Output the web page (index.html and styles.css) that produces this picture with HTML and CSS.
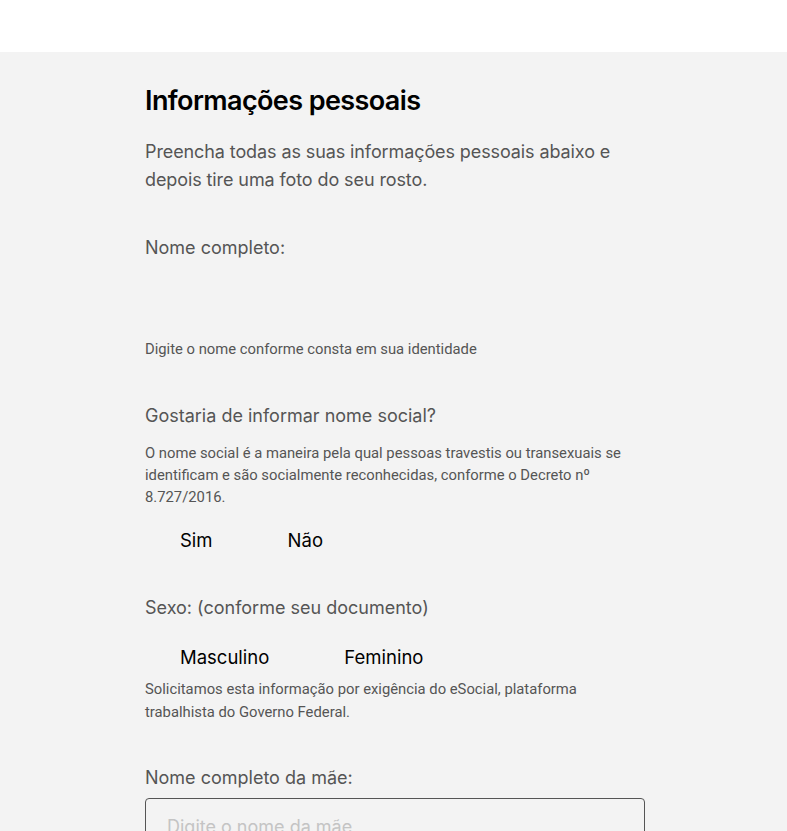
FILE: index.html
```html
<!DOCTYPE html>
<html lang="pt-BR">
  <head>
    <meta charset="UTF-8" />
    <meta name="viewport" content="width=device-width, initial-scale=1.0" />
    <title>Informações pessoais</title>
    <link rel="stylesheet" href="styles.css">
  </head>
  <body>
    <header class="topbar"></header>
    <main class="page">
      <form class="form">
        <h1 class="title">Informações pessoais</h1>
        <p class="intro">Preencha todas as suas informações pessoais abaixo e depois tire uma foto do seu rosto.</p>

        <div class="field field-name">
          <label class="label" for="nome">Nome completo:</label>
          <input class="input-ghost" id="nome" type="text" />
          <p class="hint">Digite o nome conforme consta em sua identidade</p>
        </div>

        <div class="field field-social">
          <p class="label">Gostaria de informar nome social?</p>
          <p class="hint">O nome social é a maneira pela qual pessoas travestis ou transexuais se identificam e são socialmente reconhecidas, conforme o Decreto nº 8.727/2016.</p>
          <div class="options">
            <label class="option"><input type="radio" name="social" /><span>Sim</span></label>
            <label class="option"><input type="radio" name="social" /><span>Não</span></label>
          </div>
        </div>

        <div class="field field-sex">
          <p class="label">Sexo: (conforme seu documento)</p>
          <div class="options">
            <label class="option"><input type="radio" name="sexo" /><span>Masculino</span></label>
            <label class="option"><input type="radio" name="sexo" /><span>Feminino</span></label>
          </div>
          <p class="hint">Solicitamos esta informação por exigência do eSocial, plataforma trabalhista do Governo Federal.</p>
        </div>

        <div class="field field-mother">
          <label class="label" for="mae">Nome completo da mãe:</label>
          <input class="input" id="mae" type="text" placeholder="Digite o nome da mãe" />
        </div>
      </form>
    </main>
  </body>
</html>
```

FILE: styles.css
```css
* {
  margin: 0;
  padding: 0;
  box-sizing: border-box;
}

body {
  font-family: Inter, "Noto Sans", sans-serif;
  background: #f3f3f3;
  color: #555;
}

.topbar {
  height: 52px;
  background: #ffffff;
}

.page {
  padding: 0 142px 40px 145px;
}

.form {
  display: flex;
  flex-direction: column;
}

.title {
  font-size: 27px;
  font-weight: 600;
  color: #000;
  line-height: 34px;
  letter-spacing: -0.6px;
  margin-top: 32px;
}

.intro {
  font-size: 18px;
  line-height: 28px;
  letter-spacing: -0.1px;
  margin-top: 20px;
  max-width: 480px;
}

.field {
  display: flex;
  flex-direction: column;
}

.label {
  font-size: 18px;
  line-height: 26px;
  color: #555;
}

.hint {
  font-family: Roboto, "Liberation Sans", sans-serif;
  font-size: 14.8px;
  line-height: 22px;
  color: #555;
  max-width: 490px;
}

.field-name {
  margin-top: 41px;
}

.input-ghost {
  height: 36px;
  margin: 14px 0 27px;
  border: none;
  background: transparent;
  outline: none;
}

.field-social {
  margin-top: 43px;
}

.field-social .hint {
  margin-top: 13px;
}

.options {
  display: flex;
  gap: 40px;
  margin-top: 19px;
}

.option {
  display: flex;
  align-items: center;
  gap: 11px;
  font-size: 18.5px;
  line-height: 26px;
  color: #000;
}

.option input {
  width: 24px;
  height: 24px;
  opacity: 0;
}

.field-sex {
  margin-top: 42px;
}

.field-sex .options {
  margin-top: 23px;
}

.field-sex .hint {
  margin-top: 8px;
  line-height: 23px;
}

.field-mother {
  margin-top: 41px;
}

.input {
  height: 56px;
  margin-top: 7px;
  border: 1px solid #555;
  border-radius: 4px;
  background: transparent;
  padding: 0 21px;
  font-family: Inter, sans-serif;
  font-size: 18px;
  color: #000;
}

.input::placeholder {
  color: #c4c4c4;
}
```
